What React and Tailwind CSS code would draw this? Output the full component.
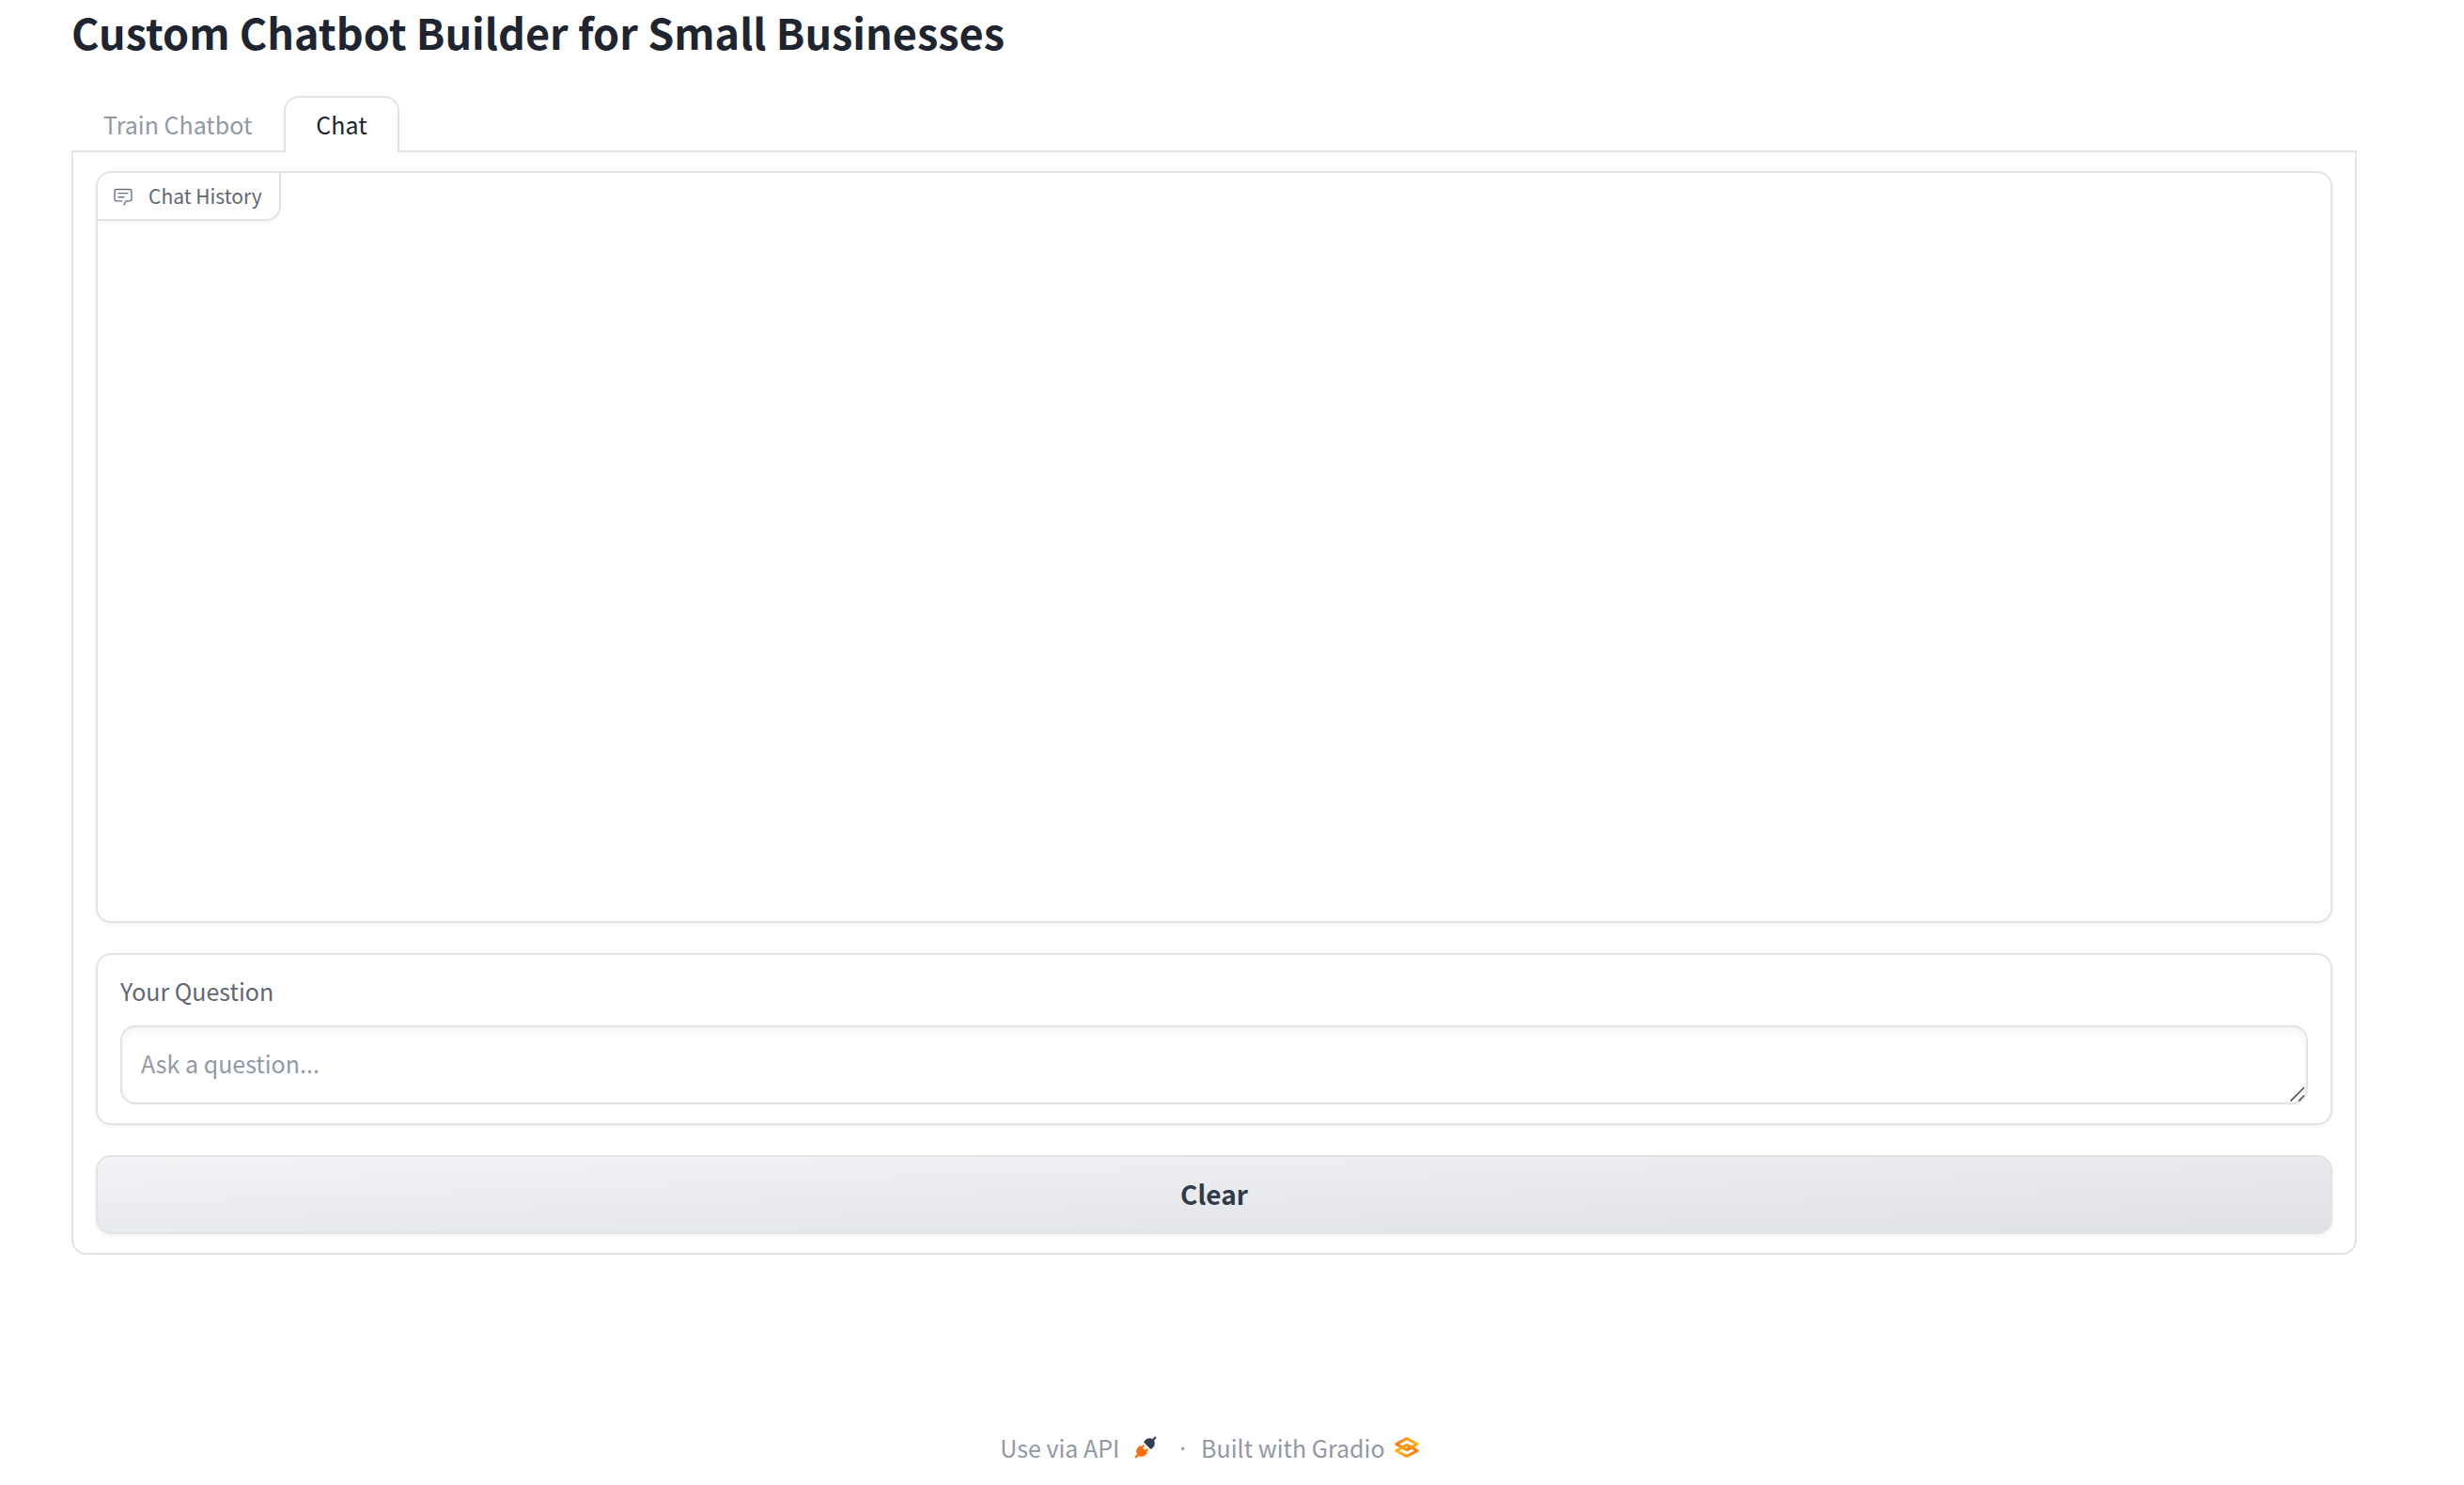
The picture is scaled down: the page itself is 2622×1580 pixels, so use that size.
import React, { useState } from "react";

function ChatIcon() {
  return (
    <svg viewBox="0 0 32 32" className="size-[22px] shrink-0 fill-[#6b7482]" aria-hidden="true">
      <path d="M17.74 30L16 29l4-7h6a2 2 0 0 0 2-2V8a2 2 0 0 0-2-2H6a2 2 0 0 0-2 2v12a2 2 0 0 0 2 2h9v2H6a4 4 0 0 1-4-4V8a4 4 0 0 1 4-4h20a4 4 0 0 1 4 4v12a4 4 0 0 1-4 4h-4.84Z" />
      <path d="M8 10h16v2H8zm0 6h10v2H8z" />
    </svg>
  );
}

function PlugIcon() {
  return (
    <svg viewBox="0 0 28 28" className="size-6 shrink-0" aria-hidden="true">
      <path
        fill="#343e4e"
        d="M26.9425 2.94265C27.4632 2.42195 27.4632 1.57773 26.9425 1.05703C26.4218 0.536329 25.5776 0.536329 25.0569 1.05703L22.5713 3.54256C21.1213 2.59333 19.5367 2.43378 18.1753 2.64006C16.5495 2.88638 15.1127 3.66838 14.3905 4.39053L12.3905 6.39053C12.1405 6.64058 12 6.97972 12 7.33334C12 7.68697 12.1405 8.0261 12.3905 8.27615L19.7239 15.6095C20.2446 16.1302 21.0888 16.1302 21.6095 15.6095L23.6095 13.6095C24.3316 12.8873 25.1136 11.4505 25.36 9.82475C25.5663 8.46312 25.4066 6.87827 24.4571 5.42807L26.9425 2.94265Z"
      />
      <path
        fill="#ff6d0a"
        d="M12.276 12.9426C12.7967 12.4219 12.7967 11.5777 12.276 11.057C11.7553 10.5363 10.9111 10.5363 10.3904 11.057L8.6665 12.7809L8.27615 12.3905C7.75545 11.8698 6.91123 11.8698 6.39053 12.3905L4.39053 14.3905C3.66838 15.1127 2.88638 16.5495 2.64006 18.1753C2.43378 19.5367 2.59333 21.1213 3.54256 22.5713L1.05703 25.0569C0.53633 25.5776 0.53633 26.4218 1.05703 26.9425C1.57773 27.4632 2.42195 27.4632 2.94265 26.9425L5.42807 24.4571C6.87827 25.4066 8.46312 25.5663 9.82475 25.36C11.4505 25.1136 12.8873 24.3316 13.6095 23.6095L15.6095 21.6095C16.1302 21.0888 16.1302 20.2446 15.6095 19.7239L15.2188 19.3332L16.9427 17.6093C17.4634 17.0886 17.4634 16.2444 16.9427 15.7237C16.422 15.203 15.5778 15.203 15.0571 15.7237L13.3332 17.4476L10.5521 14.6665L12.276 12.9426Z"
      />
    </svg>
  );
}

function GradioLogo() {
  return (
    <svg viewBox="0 0 26 22" className="h-[22px] w-[26px] shrink-0" fill="none" strokeWidth="3" strokeLinejoin="round" aria-hidden="true">
      <defs>
        <linearGradient id="logo-top" x1="0" y1="0" x2="1" y2="0">
          <stop offset="0.1" stopColor="#ff7a12" />
          <stop offset="1" stopColor="#ffb914" />
        </linearGradient>
        <linearGradient id="logo-bottom" x1="0" y1="0" x2="1" y2="0">
          <stop offset="0" stopColor="#ffb914" />
          <stop offset="0.9" stopColor="#ff7a12" />
        </linearGradient>
      </defs>
      <path stroke="url(#logo-top)" d="M13 1.6L24.2 7.5L13 13.6L1.8 7.5Z" />
      <path stroke="url(#logo-bottom)" d="M13 8.4L24.2 14.5L13 20.4L1.8 14.5Z" />
      <path stroke="url(#logo-top)" d="M13 13.6L24.2 7.5" />
    </svg>
  );
}

function Tab({ label, selected, onSelect }) {
  return (
    <button
      type="button"
      role="tab"
      aria-selected={selected}
      onClick={onSelect}
      className={
        selected
          ? "-mb-0.5 h-[60px] rounded-t-2xl border-2 border-b-0 border-[#e0e3e8] bg-white px-8 text-[#1e2530]"
          : "-mb-0.5 h-[60px] rounded-t-2xl border-2 border-b-0 border-transparent px-8 text-[#9199a6]"
      }
    >
      {label}
    </button>
  );
}

export default function App() {
  const [tab, setTab] = useState("Chat");
  const [question, setQuestion] = useState("");

  return (
    <div className="min-h-screen bg-white pr-[114px] pl-[76px] font-['Noto_Sans_CJK_SC',sans-serif] text-[25px]">
      <main>
        <h1 className="mb-[34px] text-[45px] leading-[68px] font-bold text-[#1e2530]">
          Custom Chatbot Builder for Small Businesses
        </h1>

        <div role="tablist" className="flex border-b-2 border-[#e0e3e8]">
          {["Train Chatbot", "Chat"].map((name) => (
            <Tab key={name} label={name} selected={tab === name} onSelect={() => setTab(name)} />
          ))}
        </div>

        <div role="tabpanel" className="flex flex-col gap-8 rounded-b-2xl border-2 border-t-0 border-[#e0e3e8] px-6 py-5">
          <section className="h-[800px] overflow-hidden rounded-2xl border-2 border-[#e0e3e8] shadow-[0_2px_4px_rgba(0,0,0,0.05)]">
            <h2 className="flex h-[51px] w-fit items-center gap-4 rounded-br-2xl border-r-2 border-b-2 border-[#e0e3e8] pr-4.5 pl-4 text-[21px] text-[#5f6775] shadow-[0_2px_4px_rgba(0,0,0,0.05)]">
              <ChatIcon />
              Chat History
            </h2>
          </section>

          <div className="flex flex-col rounded-2xl border-2 border-[#e0e3e8] px-6 py-5 shadow-[0_2px_4px_rgba(0,0,0,0.05)]">
            <label htmlFor="question" className="mb-[18px] leading-[37px] text-[#5f6775]">
              Your Question
            </label>
            <div className="relative flex">
              <textarea
                id="question"
                rows={1}
                value={question}
                onChange={(e) => setQuestion(e.target.value)}
                placeholder="Ask a question..."
                className="h-[84px] w-full resize-none overflow-hidden rounded-2xl border-2 border-[#e0e3e8] p-5 leading-[37px] text-[#1e2530] shadow-[inset_0_4px_8px_rgba(0,0,0,0.05)] outline-none placeholder:text-[#9199a6]"
              />
              <svg viewBox="0 0 16 16" className="absolute right-[3px] bottom-[3px] size-4 stroke-[#505053]" strokeWidth="1.6" aria-hidden="true">
                <path d="M0.5 15.5L15 1M9 15.5L15 9.5" />
              </svg>
            </div>
          </div>

          <button
            type="button"
            onClick={() => setQuestion("")}
            className="h-[84px] rounded-2xl border-2 border-[#e0e3e8] bg-[linear-gradient(to_bottom_right,#f2f3f5,#dfe1e7)] pb-0.5 text-[28px] font-bold text-[#303a48] shadow-[0_2px_4px_rgba(0,0,0,0.05)]"
          >
            Clear
          </button>
        </div>
      </main>

      <footer className="mt-[185px] flex items-center justify-center pr-2.5 leading-10 text-[#9199a6]">
        <a href="#api" className="flex items-center gap-4">
          Use via API
          <PlugIcon />
        </a>
        <span className="mr-4 ml-6 font-['Noto_Sans',sans-serif]">·</span>
        <a href="#gradio" className="flex items-center gap-2.5">
          Built with Gradio
          <GradioLogo />
        </a>
      </footer>
    </div>
  );
}
